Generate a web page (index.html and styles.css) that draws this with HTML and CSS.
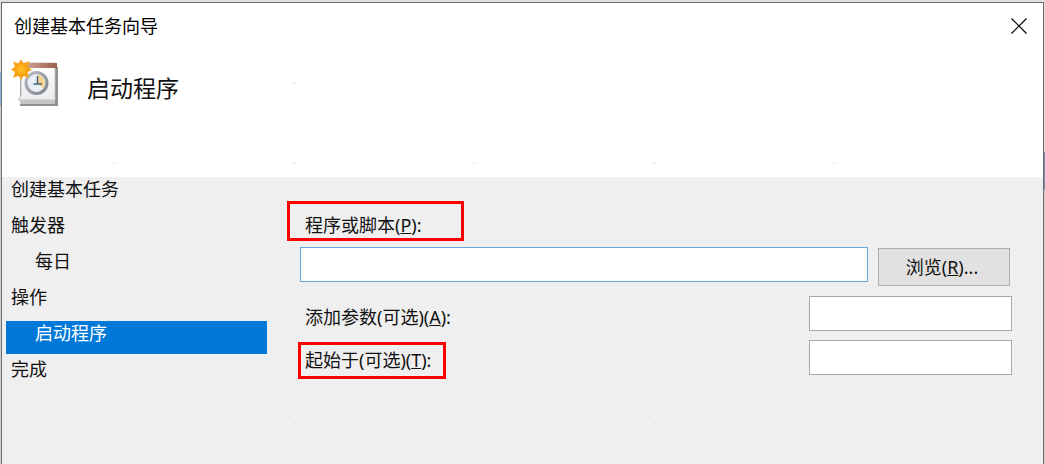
FILE: index.html
```html
<!DOCTYPE html>
<html lang="zh-CN">
<head>
<meta charset="utf-8">
<meta name="viewport" content="width=device-width, initial-scale=1">
<title>创建基本任务向导</title>
<link rel="stylesheet" href="styles.css">
</head>
<body>
<main class="dialog">
  <header class="header">
    <div class="titlebar">
      <span class="caption">创建基本任务向导</span>
      <button class="close" type="button" aria-label="关闭">
        <svg width="16" height="16" viewBox="0 0 16 16"><path d="M.5.5l15 15M15.500.5l-15 15" fill="none" stroke="#000" stroke-width="1.2"/></svg>
      </button>
    </div>
    <div class="banner">
      <svg class="task-icon" width="48" height="48" viewBox="0 0 48 48" aria-hidden="true">
        <defs>
          <linearGradient id="paper" x1="0" y1="0" x2="0" y2="1"><stop offset="0" stop-color="#fff"/><stop offset="1" stop-color="#ececee"/></linearGradient>
          <linearGradient id="band" x1="0" y1="0" x2="1" y2="0"><stop offset="0" stop-color="#d8ad9c"/><stop offset="1" stop-color="#9a5e4a"/></linearGradient>
          <linearGradient id="ring" x1="0" y1="0" x2="1" y2="1"><stop offset="0" stop-color="#b9bdc2"/><stop offset="1" stop-color="#7d8288"/></linearGradient>
          <radialGradient id="sun"><stop offset="0" stop-color="#ffc428"/><stop offset="1" stop-color="#f99d0c"/></radialGradient>
        </defs>
        <path d="M9 8h38v39H9z" fill="#8f8f8f"/>
        <path d="M9 41h35v4H9z" fill="#c4c4c4"/>
        <path d="M10 4h34v37H7l3-4z" fill="url(#paper)" stroke="#c2c2c2"/>
        <path d="M10 4h36v5H10z" fill="url(#band)"/>
        <circle cx="25.500" cy="24" r="10.500" fill="#e9eff6" stroke="url(#ring)" stroke-width="3"/>
        <path d="M26 24v-8a8 8 0 0 1 6 13z" fill="#f3d38c"/>
        <path d="M26.500 17v8h-4M26 25h5" fill="none" stroke="#48617e" stroke-width="1.500"/>
        <path d="M10 0L12.300 4.500 19 2 16.500 7.500 21 11 16.500 13 18 19 12.500 16.800 10 21 7.500 16.800 2 19 4 13 0 10.500 4 8 2 2.500 7.500 4.500z" fill="#f9a51a"/>
        <circle cx="10.300" cy="10.500" r="7" fill="url(#sun)"/>
      </svg>
      <h1 class="heading">启动程序</h1>
    </div>
  </header>
  <div class="content">
    <ol class="steps">
      <li class="step">创建基本任务</li>
      <li class="step">触发器</li>
      <li class="step step-sub">每日</li>
      <li class="step">操作</li>
      <li class="step step-sub step-current" aria-current="step">启动程序</li>
      <li class="step">完成</li>
    </ol>
    <form class="form">
      <label class="label marked marked-program" for="program">程序或脚本(<u>P</u>):</label>
      <div class="program-row">
        <input class="field field-program" id="program" type="text">
        <button class="browse" type="button">浏览(<u>R</u>)...</button>
      </div>
      <div class="rows">
        <div class="row">
          <label class="label label-plain" for="arguments">添加参数(可选)(<u>A</u>):</label>
          <input class="field field-small" id="arguments" type="text">
        </div>
        <div class="row">
          <label class="label marked marked-start" for="start-in">起始于(可选)(<u>T</u>):</label>
          <input class="field field-small" id="start-in" type="text">
        </div>
      </div>
    </form>
  </div>
</main>
</body>
</html>
```
FILE: styles.css
```css
* {
  box-sizing: border-box;
}

body {
  display: flex;
  min-height: 100vh;
  margin: 0;
  padding: 2px 1px 0;
  background:
    linear-gradient(#e0e0e0 72px, #8db4dc 72px, #8db4dc 106px, #cfcfcf 106px) left / 50% 100% no-repeat,
    linear-gradient(#e0e0e0 152px, #6f8fb8 152px, #6f8fb8 190px, #cfcfcf 190px) right / 50% 100% no-repeat,
    #e0e0e0;
  color: #111;
  font: 18px/24px "Noto Sans", "Noto Sans CJK SC", sans-serif;
}

.dialog {
  display: flex;
  flex: 1;
  flex-direction: column;
  min-width: 0;
  border: 1px solid #6c6c6c;
  border-bottom: 0;
  background: #efefef;
}

/* Faint speckle printed at regular intervals */
.header,
.content {
  background-repeat: no-repeat;
  background-size: 3px 2px;
}

.header {
  padding-bottom: 70px;
  background-color: #fff;
  background-image:
    linear-gradient(#f2f2f2, #f2f2f2), linear-gradient(#f2f2f2, #f2f2f2),
    linear-gradient(#f2f2f2, #f2f2f2), linear-gradient(#f2f2f2, #f2f2f2),
    linear-gradient(#f2f2f2, #f2f2f2), linear-gradient(#f2f2f2, #f2f2f2);
  background-position: 111px 159px, 291px 159px, 471px 159px, 651px 159px, 831px 159px, 291px 79px;
}

.titlebar {
  display: flex;
  align-items: center;
  justify-content: space-between;
  padding: 11px 16px 0 12px;
}

.caption {
  color: #000;
}

.close {
  display: flex;
  padding: 0;
  border: 0;
  background: none;
}

.banner {
  display: flex;
  align-items: center;
  gap: 28px;
  padding: 21px 9px 0;
}

.heading {
  margin: 10px 0 0;
  font-size: 23px;
  font-weight: 400;
  line-height: 32px;
}

.content {
  display: flex;
  flex: 1;
  gap: 20px;
  padding: 0 31px 0 4px;
  background-image:
    linear-gradient(#e8e8e8, #e8e8e8), linear-gradient(#e8e8e8, #e8e8e8),
    linear-gradient(#e8e8e8, #e8e8e8), linear-gradient(#e8e8e8, #e8e8e8),
    linear-gradient(#e8e8e8, #e8e8e8);
  background-position: 111px 245px, 291px 245px, 471px 245px, 651px 245px, 831px 245px;
}

.steps {
  display: flex;
  flex: 0 0 261px;
  flex-direction: column;
  gap: 3px;
  margin: 0;
  padding: 0;
  list-style: none;
}

.step {
  height: 33px;
  padding: 0 5px;
}

.step-sub {
  padding-left: 29px;
}

.step-current {
  background: #0078d7;
  color: #fff;
}

.form {
  flex: 1;
  min-width: 0;
  padding-top: 24px;
}

.label {
  display: block;
  white-space: nowrap;
}

.marked {
  border: 3px solid #f00;
}

.marked-program {
  width: 177px;
  padding: 9px 0 1px 15px;
}

.marked-start {
  margin: 2px 0 0 11px;
  padding: 3px 12px 4px 4px;
}

.label-plain {
  padding: 9px 0 0 18px;
}

.program-row {
  display: flex;
  align-items: flex-start;
  gap: 10px;
  padding: 6px 2px 0 13px;
}

.field {
  height: 35px;
  margin: 0;
  padding: 0 6px;
  border: 1px solid #a8a8a8;
  border-radius: 0;
  background: #fff;
  font: inherit;
}

.field-program {
  flex: 1;
  min-width: 0;
  border-color: #66a7dc;
}

.field-small {
  width: 203px;
}

.browse {
  width: 132px;
  height: 38px;
  margin: 1px 0 0;
  padding: 0 4px 0 0;
  border: 1px solid #adadad;
  background: #e1e1e1;
  color: #111;
  font: inherit;
}

.rows {
  display: grid;
  gap: 9px;
  padding-top: 10px;
}

.row {
  display: flex;
  align-items: flex-start;
  justify-content: space-between;
  height: 35px;
}
```
